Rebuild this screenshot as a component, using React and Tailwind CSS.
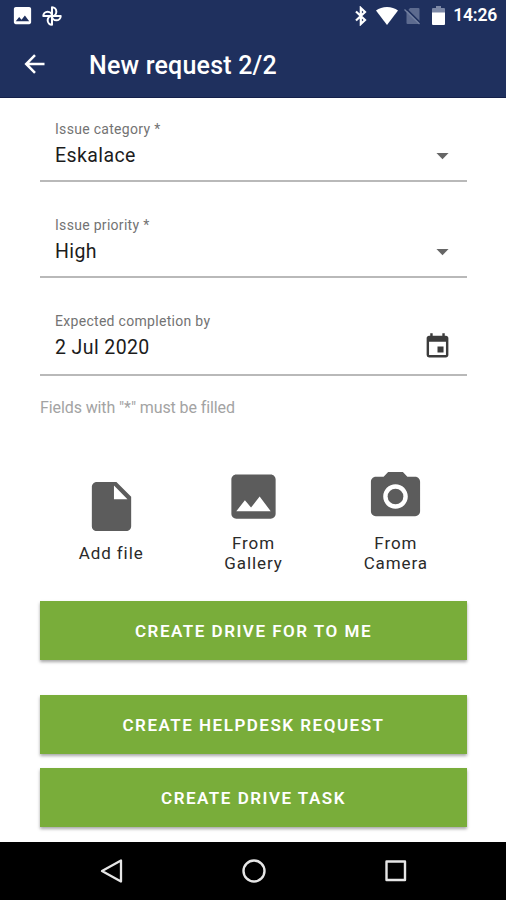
import React from 'react';
import { MdArrowDropDown, MdEvent, MdImage, MdInsertDriveFile, MdPhotoCamera } from 'react-icons/md';

// Status bar on top of the screen
const StatusBar = () => (
  <div className="h-[31px] flex items-center justify-between pl-[11px] pr-[9px] text-white">
    <div className="flex items-center">
      <MdImage className="size-[23px]" />
      <svg className="size-[20px] ml-[8px]" viewBox="0 0 20 20" fill="none" stroke="currentColor" strokeWidth="2" strokeLinejoin="round">
        <path d="M10 10V1.300a4.350 4.350 0 0 1 0 8.700z" />
        <path d="M10 10h8.700a4.350 4.350 0 0 1-8.700 0z" />
        <path d="M10 10v8.700a4.350 4.350 0 0 1 0-8.700z" />
        <path d="M10 10H1.300a4.350 4.350 0 0 1 8.700 0z" />
      </svg>
    </div>
    <div className="flex items-center">
      <svg className="w-[12px] h-[20px]" viewBox="0 0 12 20" fill="none" stroke="currentColor" strokeWidth="2.200">
        <path d="M1 5.500l9 8.500-4.200 4V2L10 6l-9 8.500" />
      </svg>
      <svg className="w-[22px] h-[18px] ml-[9px]" viewBox="0 0 22 18" fill="currentColor">
        <path d="M0 3.600C3 1.200 6.800 0 11 0s8 1.200 11 3.600L11 18z" />
      </svg>
      <svg className="w-[17px] h-[18px] ml-[6px]" viewBox="0 0 17 18">
        <path d="M6 1h8.500a1 1 0 0 1 1 1v14a1 1 0 0 1-1 1H3.500a1 1 0 0 1-1-1V5z" fill="#5d6b8f" />
        <path d="M1.500 1l15 15" stroke="#1f305e" strokeWidth="1.600" />
        <path d="M0.500 2.500l15 14.500" stroke="#7380a0" strokeWidth="1.300" />
      </svg>
      <svg className="w-[13px] h-[19px] ml-[11px]" viewBox="0 0 13 19">
        <path d="M4 0h5v2h3a1 1 0 0 1 1 1v4H0V3a1 1 0 0 1 1-1h3z" fill="#7c88a6" />
        <path d="M0 6.500h13V18a1 1 0 0 1-1 1H1a1 1 0 0 1-1-1z" fill="#fff" />
      </svg>
      <span className="ml-[8px] text-[17.5px] leading-none font-semibold tracking-[-0.2px]">14:26</span>
    </div>
  </div>
);

const Header = () => (
  <header className="h-[98px] bg-[#1f305e] border-b border-[#14204a]">
    <StatusBar />
    <div className="h-[66px] flex items-center pl-[24px] text-white">
      <button type="button" aria-label="Back">
        <svg className="w-[21px] h-[20px]" viewBox="0 0 21 20" fill="none" stroke="currentColor" strokeWidth="2.500">
          <path d="M20.500 10H2.500M11 1.200L2.200 10l8.800 8.800" />
        </svg>
      </button>
      <h1 className="ml-[44px] mt-[3px] text-[25px] leading-none font-medium tracking-[0.2px]">New request 2/2</h1>
    </div>
  </header>
);

const Field = ({ label, value, icon, className }) => (
  <div className={`flex items-center justify-between pl-[15px] border-b-2 border-[#b9b9b9] ${className}`}>
    <div>
      <div className="text-[14px] leading-[16px] tracking-[0.3px] text-[#737373]">{label}</div>
      <div className="mt-[7px] text-[19.5px] leading-[24px] tracking-[0.4px] text-[#1c1c1c]">{value}</div>
    </div>
    {icon}
  </div>
);

const Attachment = ({ icon, children }) => (
  <button type="button" className="flex flex-col items-center justify-center text-[17px] leading-[20px] tracking-[0.9px] text-[#2a2a2a]">
    {icon}
    <span>{children}</span>
  </button>
);

const ActionButton = ({ children, className = '' }) => (
  <button
    type="button"
    className={`w-full h-[59px] pt-[2px] shrink-0 bg-[#79ad3a] text-white text-[17px] font-semibold tracking-[1.5px] uppercase shadow-[0_2px_3px_rgba(0,0,0,0.35)] ${className}`}
  >
    {children}
  </button>
);

const NavigationBar = () => (
  <nav className="h-[58px] bg-black grid grid-cols-3 items-center justify-items-center pl-[41px] pr-[39px] text-[#e6e6e6]">
    <svg className="size-[26px]" viewBox="0 0 26 26" fill="none" stroke="currentColor" strokeWidth="2.300" strokeLinejoin="round">
      <path d="M22 2.500v21L3 13z" />
    </svg>
    <svg className="size-[26px]" viewBox="0 0 26 26" fill="none" stroke="currentColor" strokeWidth="2.400">
      <circle cx="13" cy="13" r="10.500" />
    </svg>
    <svg className="size-[26px]" viewBox="0 0 26 26" fill="none" stroke="currentColor" strokeWidth="2.400" strokeLinejoin="round">
      <rect x="3.500" y="3.500" width="18.500" height="18.500" />
    </svg>
  </nav>
);

const App = () => {
  return (
    <div className="w-[506px] h-[900px] flex flex-col overflow-hidden bg-white font-['Roboto',sans-serif]">
      <Header />

      <main className="flex-1 flex flex-col pl-[40px] pr-[39px]">
        {/* Request details */}
        <Field
          className="h-[84px] pt-[10px] pr-[10px]"
          label="Issue category *"
          value="Eskalace"
          icon={<MdArrowDropDown className="size-[29px] mt-[22px] text-[#666]" />}
        />
        <Field
          className="h-[96px] pt-[22px] pr-[10px]"
          label="Issue priority *"
          value="High"
          icon={<MdArrowDropDown className="size-[29px] mt-[22px] text-[#666]" />}
        />
        <Field
          className="h-[98px] pt-[20px] pr-[15px]"
          label="Expected completion by"
          value="2 Jul 2020"
          icon={<MdEvent className="size-[29px] mt-[21px] text-[#3c3c3c]" />}
        />
        <p className="mt-[22px] text-[16px] leading-[20px] tracking-[-0.1px] text-[#a3a3a3]">
          Fields with "*" must be filled
        </p>

        {/* Attachments */}
        <div className="mt-[48px] h-[108px] grid grid-cols-3">
          <Attachment icon={<MdInsertDriveFile className="size-[59px] mb-[7px] text-[#5c5c5c]" />}>
            Add file
          </Attachment>
          <Attachment icon={<MdImage className="size-[59px] mb-[7px] text-[#5c5c5c]" />}>
            From<br />Gallery
          </Attachment>
          <Attachment icon={<MdPhotoCamera className="size-[59px] mb-[7px] text-[#5c5c5c]" />}>
            From<br />Camera
          </Attachment>
        </div>

        {/* Actions */}
        <ActionButton className="mt-[27px]">Create drive for to me</ActionButton>
        <ActionButton className="mt-[35px]">Create helpdesk request</ActionButton>
        <ActionButton className="mt-[14px]">Create drive task</ActionButton>
      </main>

      <NavigationBar />
    </div>
  );
};

export default App;
